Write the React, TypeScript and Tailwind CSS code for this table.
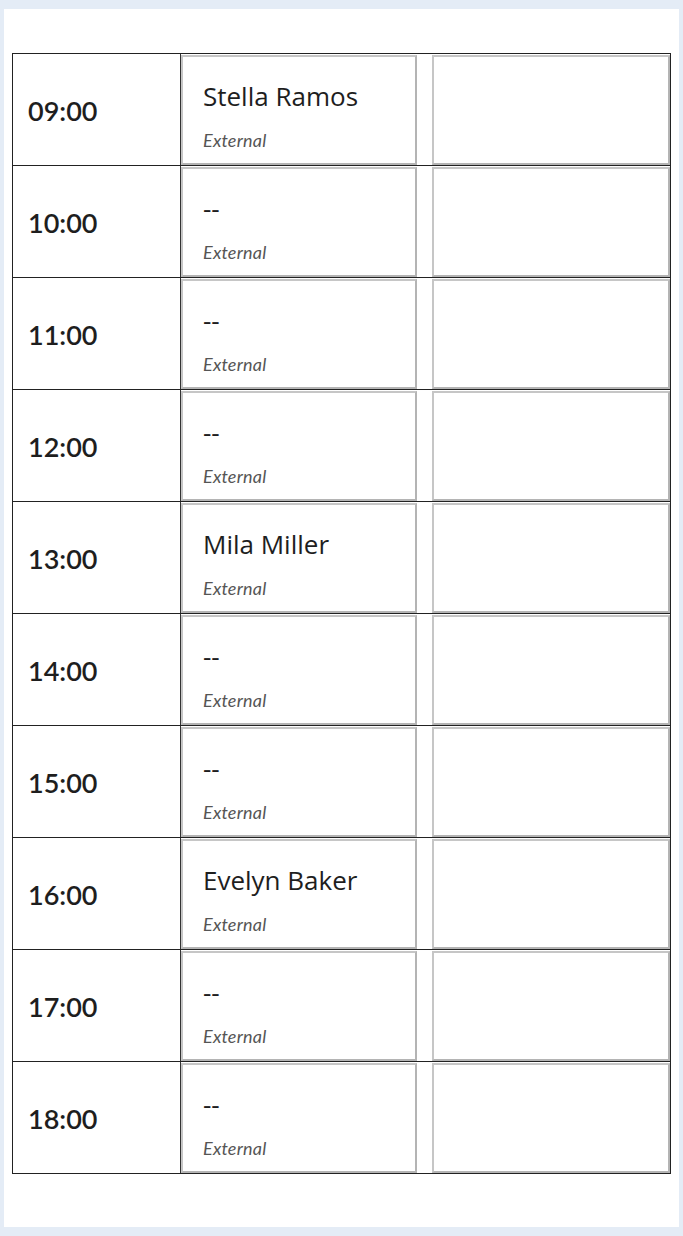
import React from "react";

const rows: { time: string; name: string }[] = [
  { time: "09:00", name: "Stella Ramos" },
  { time: "10:00", name: "--" },
  { time: "11:00", name: "--" },
  { time: "12:00", name: "--" },
  { time: "13:00", name: "Mila Miller" },
  { time: "14:00", name: "--" },
  { time: "15:00", name: "--" },
  { time: "16:00", name: "Evelyn Baker" },
  { time: "17:00", name: "--" },
  { time: "18:00", name: "--" },
];

export default function App() {
  return (
    <div
      className="min-h-[1236px] bg-[#e4ecf6] pt-[9px] pl-[4px] pr-[4px] pb-[8px]"
      style={{ fontFamily: "Lato, 'Open Sans', sans-serif" }}
    >
      <div className="bg-white px-2 pt-[44px] pb-[53px]">
        <div className="border-l border-r border-t border-[#222]">
          {rows.map((r) => (
            <div key={r.time} className="flex h-[112px] border-b border-[#222]">
              <div className="w-[168px] shrink-0 border-r border-[#333] flex items-center pl-[15px] pt-[3px]">
                <span className="text-[27px] font-semibold text-[#1e1e1e]">{r.time}</span>
              </div>
              <div className="w-[236px] shrink-0 mt-[1px] border-2 border-t-[#c6c6c6] border-l-[#c6c6c6] border-r-[#b4b4b4] border-b-[#b4b4b4] pl-[20px] pt-[23px]">
                <div className="text-[26px] leading-[32px] text-[#1e1e1e] font-['Open_Sans',sans-serif]">{r.name}</div>
                <div className="mt-[16px] text-[18px] leading-[24px] italic text-[#555] tracking-[0.2px]">External</div>
              </div>
              <div className="ml-[15px] flex-1 mt-[1px] border-2 border-t-[#c6c6c6] border-l-[#c6c6c6] border-r-[#b4b4b4] border-b-[#b4b4b4]" />
            </div>
          ))}
        </div>
      </div>
    </div>
  );
}
